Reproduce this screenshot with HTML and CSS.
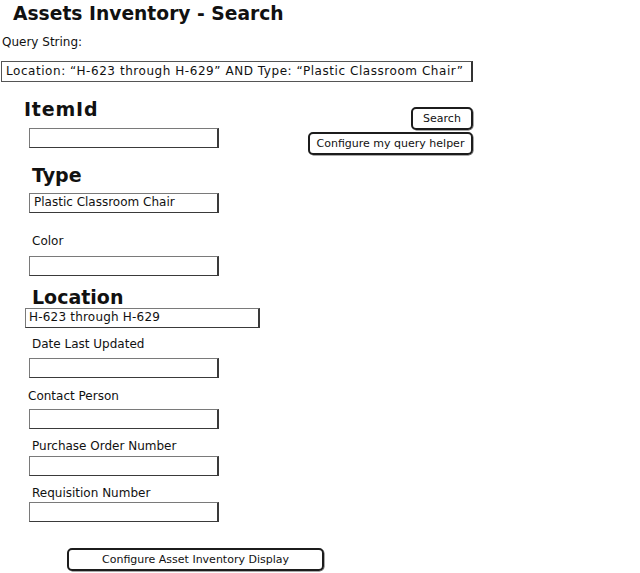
FILE: index.html
```html
<!DOCTYPE html>
<html>
<head>
<meta charset="utf-8">
<link rel="stylesheet" href="styles.css">
</head>
<body>
<h1 class="title">Assets Inventory - Search</h1>
<div class="qlabel">Query String:</div>
<div class="qbox">Location: “H-623 through H-629” AND Type: “Plastic Classroom Chair”</div>
<div class="top-row">
  <div class="form">
    <h2 class="head head-item">ItemId</h2>
    <div class="field f-item"></div>
  </div>
  <div class="actions">
    <div class="btn btn-search">Search</div>
    <div class="btn btn-helper">Configure my query helper</div>
  </div>
</div>
<div class="form">
  <h2 class="head head-type">Type</h2>
  <div class="field f-type">Plastic Classroom Chair</div>
  <div class="label l-color">Color</div>
  <div class="field f-color"></div>
  <h2 class="head head-loc">Location</h2>
  <div class="field wide f-loc">H-623 through H-629</div>
  <div class="label l-date">Date Last Updated</div>
  <div class="field f-date"></div>
  <div class="label l-contact">Contact Person</div>
  <div class="field f-contact"></div>
  <div class="label l-po">Purchase Order Number</div>
  <div class="field f-po"></div>
  <div class="label l-req">Requisition Number</div>
  <div class="field f-req"></div>
  <div class="btn btn-display">Configure Asset Inventory Display</div>
</div>
</body>
</html>
```
FILE: styles.css
```css
html, body {
  margin: 0;
  padding: 0;
  background: #fff;
}
body {
  font-family: "DejaVu Sans", Verdana, sans-serif;
  font-size: 12px;
  color: #111;
  width: 640px;
  height: 573px;
  overflow: hidden;
}
.title {
  margin: 3px 0 0 13px;
  font-size: 18.7px;
  line-height: 22px;
  font-weight: bold;
}
.qlabel {
  margin: 10px 0 0 2px;
  line-height: 15px;
}
.qbox {
  margin: 11px 0 0 1px;
  width: 472px;
  height: 21px;
  box-sizing: border-box;
  border: 1px solid #555;
  border-right: 2px solid #333;
  padding-left: 4px;
  line-height: 18px;
  letter-spacing: 0.55px;
  white-space: nowrap;
}
.top-row {
  display: flex;
  width: 473px;
  margin-top: 16px;
}
.form {
  display: flex;
  flex-direction: column;
  align-items: flex-start;
}
.actions {
  margin-left: auto;
  padding-top: 9px;
  display: flex;
  flex-direction: column;
  align-items: flex-end;
  gap: 2px;
}
.head {
  margin: 0;
  font-size: 19px;
  line-height: 22px;
  font-weight: bold;
  margin-left: 32px;
}
.head-item { margin-left: 24px; letter-spacing: 0.8px; }
.head-type { margin-top: 9px; }
.head-loc { margin-top: 10px; }
.label {
  line-height: 15px;
  margin-left: 32px;
}
.l-color { margin-top: 21px; }
.l-date { margin-top: 9px; }
.l-contact { margin-top: 11px; margin-left: 28px; }
.l-po { margin-top: 10px; }
.l-req { margin-top: 10px; }
.field {
  width: 190px;
  height: 20px;
  box-sizing: border-box;
  margin-left: 29px;
  border: 1px solid #7a7a7a;
  border-right: 2px solid #3a3a3a;
  border-bottom: 1px solid #3a3a3a;
  padding-left: 4px;
  line-height: 17px;
  white-space: nowrap;
}
.f-item { margin-top: 8px; }
.f-type { margin-top: 7px; }
.f-color { margin-top: 7px; }
.wide {
  width: 235px;
  margin-left: 25px;
  padding-left: 3px;
  letter-spacing: 0.2px;
}
.f-loc { margin-top: 0; }
.f-date { margin-top: 6px; }
.f-contact { margin-top: 5px; }
.f-po { margin-top: 2px; }
.f-req { margin-top: 1px; }
.btn {
  box-sizing: border-box;
  height: 23px;
  border: 2px solid #1c1c1c;
  border-radius: 5px;
  font-family: "DejaVu Sans", sans-serif;
  font-size: 11px;
  line-height: 19px;
  text-align: center;
  white-space: nowrap;
  color: #111;
  box-shadow: 0.5px 0.5px 0 #555;
}
.btn-display {
  margin: 26px 0 0 67px;
  width: 257px;
}
.btn-search {
  width: 62px;
}
.btn-helper {
  width: 165px;
}
```
